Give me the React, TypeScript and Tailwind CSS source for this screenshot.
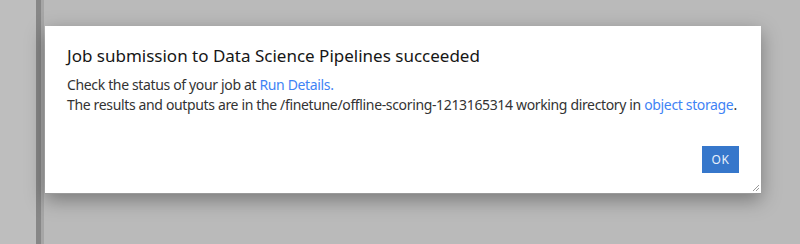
export default function App() {
  return (
    <div
      className="relative h-[244px] w-full overflow-hidden bg-[#bcbcbc]"
      style={{ fontFamily: '"Noto Sans", "Open Sans", sans-serif' }}
    >
      <div className="flex h-full">
        <div className="w-[36px] bg-[#bebebe]" />
        <div className="w-[5px] bg-[#878787]" />
        <div className="w-[3px] bg-[#a6a6a6]" />
        <div className="flex-1 bg-[#bababa]" />
      </div>

      <div className="absolute left-[45px] top-[26px] flex h-[168px] w-[716px] flex-col border-b border-[#9a9a9a] bg-white px-[22px] pt-[18px] shadow-[0_6px_18px_rgba(0,0,0,0.35)]">
        <h2 className="text-[17px] leading-[24px] text-[#161616]">
          Job submission to Data Science Pipelines succeeded
        </h2>
        <div className="mt-[7px] whitespace-nowrap text-[14px] leading-[20px] tracking-[-0.35px] text-[#333333]">
          <p>
            Check the status of your job at{' '}
            <a className="text-[#3f83f5]">Run Details.</a>
          </p>
          <p>
            The results and outputs are in the /finetune/offline-scoring-1213165314 working directory in{' '}
            <a className="text-[#3f83f5]">object storage</a>.
          </p>
        </div>
        <div className="mt-auto mb-[20px] flex justify-end">
          <button className="h-[27px] w-[37px] bg-[#3677cb] text-[12px] tracking-[0.5px] text-[#e8f0fb]">
            OK
          </button>
        </div>
        <svg
          className="absolute bottom-[1px] right-[1px]"
          width="8"
          height="8"
          viewBox="0 0 8 8"
        >
          <path d="M7 1 L1 7 M7 4 L4 7" stroke="#9a9a9a" strokeWidth="1" />
        </svg>
      </div>
    </div>
  );
}
